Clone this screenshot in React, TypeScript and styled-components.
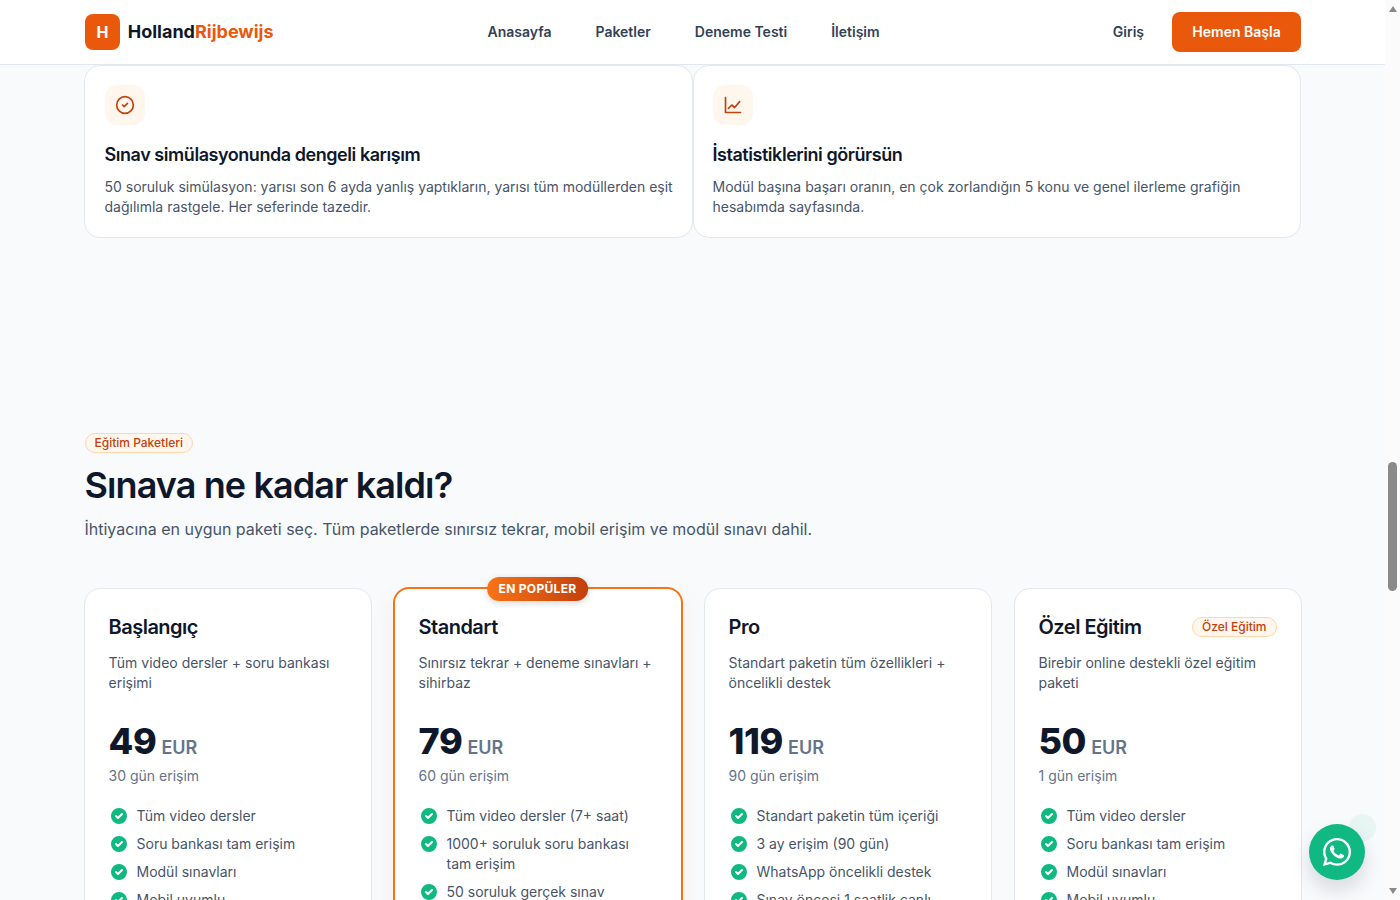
import React from 'react';
import styled, { createGlobalStyle } from 'styled-components';
import { CircleCheck } from 'lucide-react';
import { FaWhatsapp } from 'react-icons/fa';
import { HiCheckCircle } from 'react-icons/hi';

const Global = createGlobalStyle`
  * { box-sizing: border-box; }
  html, body { margin: 0; height: 100%; overflow: hidden; }
  body { font-family: Inter, "Noto Sans", sans-serif; background: #f8fafc; color: #0f172a; }
`;

const Viewport = styled.div`
  display: flex;
  height: 900px;
  overflow: hidden;
  position: relative;
`;
const Page = styled.div`
  flex: 1;
  min-width: 0;
  background: #f8fafc;
`;
const Header = styled.header`
  height: 65px;
  background: #fff;
  border-bottom: 1px solid #e2e8f0;
  position: relative;
  z-index: 2;
`;
const Wrap = styled.div`
  width: 1280px;
  margin: 0 auto;
  padding: 0 32px;
`;
const HeaderRow = styled(Wrap)`
  height: 64px;
  display: flex;
  align-items: center;
`;
const Logo = styled.a`
  display: flex;
  align-items: center;
  gap: 8px;
  width: 189px;
  flex: none;
  padding-left: 0.5px;
`;
const LogoMark = styled.span`
  width: 36px;
  height: 36px;
  border-radius: 8px;
  background: #ea580c;
  color: #fff;
  font-size: 16px;
  font-weight: 700;
  display: flex;
  align-items: center;
  justify-content: center;
`;
const LogoText = styled.span`
  font-size: 18px;
  font-weight: 700;
  color: #0f172a;
  white-space: nowrap;
  padding-bottom: 2px;
`;
const LogoAccent = styled.span`
  color: #ea580c;
`;
const Nav = styled.nav`
  display: flex;
  gap: 44px;
  margin-left: 214px;
`;
const NavLink = styled.a`
  font-size: 14px;
  font-weight: 600;
  color: #334155;
  white-space: nowrap;
  padding-bottom: 2px;
`;
const HeaderRight = styled.div`
  margin-left: auto;
  display: flex;
  align-items: center;
  gap: 27.5px;
`;
const Cta = styled.button`
  width: 129px;
  height: 40px;
  border: none;
  border-radius: 8px;
  background: #ea580c;
  color: #fff;
  font-family: inherit;
  font-size: 14px;
  font-weight: 600;
  padding: 0 0 2px 1px;
`;
const FeatureGrid = styled.div`
  display: grid;
  grid-template-columns: 609px 608px;
  margin-left: -1px;
`;
const FeatureCard = styled.article<{ $lead?: boolean }>`
  height: 173px;
  padding: 19px 16px 19px ${p => (p.$lead ? '20px' : '19px')};
  background: #fff;
  border: 1px solid #e2e8f0;
  border-radius: 16px;
`;
const FeatureIcon = styled.div`
  width: 40px;
  height: 40px;
  border-radius: 12px;
  background: #fff7ed;
  color: #c2410c;
  display: flex;
  align-items: center;
  justify-content: center;
`;
const FeatureTitle = styled.h3`
  margin: 16px 0 8px;
  font-size: 18px;
  line-height: 28px;
  font-weight: 600;
  letter-spacing: -0.025em;
  color: #0f172a;
`;
const FeatureText = styled.p`
  margin: 0;
  font-size: 14px;
  line-height: 20px;
  color: #475569;
`;
const Section = styled.section`
  padding-top: 195px;
`;
const Pill = styled.span`
  display: inline-flex;
  align-items: center;
  height: 20px;
  padding: 0 9px 1px;
  border-radius: 999px;
  background: #fff7ed;
  border: 1px solid #fed7aa;
  color: #c2410c;
  font-size: 12px;
  font-weight: 500;
  white-space: nowrap;
`;
const SectionPill = styled(Pill)`
  display: flex;
  width: fit-content;
`;
const Heading = styled.h2`
  margin: 12px 0 0;
  font-size: 36px;
  line-height: 40px;
  font-weight: 600;
  letter-spacing: -0.025em;
  color: #0f172a;
`;
const Lead = styled.p`
  margin: 12px 0 0;
  font-size: 16px;
  line-height: 24px;
  color: #475569;
`;
const PlanGrid = styled.div`
  margin-top: 47px;
  display: grid;
  grid-template-columns: repeat(4, 1fr);
  gap: 24px;
  align-items: start;
`;
const PlanCard = styled.article<{ $popular?: boolean }>`
  position: relative;
  background: #fff;
  border-radius: 16px;
  padding: 23px 24px;
  height: 600px;
  border: ${p => (p.$popular ? '2px solid #f97316' : '1px solid #e2e8f0')};
  margin: ${p => (p.$popular ? '-1px -2px' : '0 -1px')};
  box-shadow: ${p => (p.$popular ? '0 10px 25px rgba(249,115,22,0.08)' : 'none')};
`;
const PopularBadge = styled.span`
  position: absolute;
  top: -12px;
  left: 50%;
  transform: translateX(-50%);
  height: 24px;
  padding: 0 12px 1px;
  display: flex;
  align-items: center;
  border-radius: 999px;
  background: linear-gradient(90deg, #f97316, #c2410c);
  color: #fff;
  font-size: 12px;
  font-weight: 700;
  letter-spacing: 0.025em;
  white-space: nowrap;
  box-shadow: 0 2px 6px rgba(15, 23, 42, 0.18);
`;
const TitleRow = styled.div`
  display: flex;
  align-items: center;
  justify-content: space-between;
`;
const PlanTitle = styled.h3`
  margin: 0;
  font-size: 20px;
  line-height: 30px;
  font-weight: 600;
  letter-spacing: -0.025em;
  color: #0f172a;
`;
const PlanText = styled.p`
  margin: 11px 0 0;
  font-size: 14px;
  line-height: 20px;
  color: #475569;
`;
const PriceRow = styled.div`
  margin-top: 24px;
  display: flex;
  align-items: baseline;
  gap: 5px;
  height: 46px;
`;
const Price = styled.span`
  font-size: 36px;
  line-height: 48px;
  font-weight: 800;
  letter-spacing: -0.01em;
  color: #0f172a;
`;
const Currency = styled.span`
  font-size: 18px;
  font-weight: 600;
  color: #64748b;
`;
const Access = styled.div`
  margin-top: 3px;
  font-size: 14px;
  line-height: 20px;
  color: #64748b;
`;
const FeatureList = styled.ul`
  list-style: none;
  margin: 20px 0 0;
  padding: 0;
  display: flex;
  flex-direction: column;
  gap: 8px;
`;
const FeatureItem = styled.li`
  display: flex;
  gap: 8px;
  font-size: 14px;
  line-height: 20px;
  color: #475569;
`;
const Check = styled(HiCheckCircle)`
  flex: none;
  width: 20px;
  height: 20px;
  color: #10b981;
`;
const ScrollTrack = styled.div`
  flex: none;
  width: 15px;
  height: 900px;
  background: #fbfbfb;
  display: flex;
  flex-direction: column;
  align-items: center;
`;
const ArrowUp = styled.span`
  margin-top: 6px;
  width: 0;
  height: 0;
  border-left: 4.5px solid transparent;
  border-right: 4.5px solid transparent;
  border-bottom: 6px solid #8a8a8a;
`;
const Thumb = styled.span`
  margin-top: 450px;
  width: 9px;
  height: 129px;
  border-radius: 5px;
  background: #8a8a8a;
`;
const ArrowDown = styled.span`
  margin-top: 297px;
  width: 0;
  height: 0;
  border-left: 4.5px solid transparent;
  border-right: 4.5px solid transparent;
  border-top: 6px solid #8a8a8a;
`;
const Whats = styled.a`
  position: absolute;
  left: 1309px;
  top: 824px;
  width: 56px;
  height: 56px;
  border-radius: 50%;
  background: #10b981;
  color: #fff;
  display: flex;
  align-items: center;
  justify-content: center;
  box-shadow: 0 10px 20px rgba(15, 23, 42, 0.14);
  z-index: 3;
`;
const Ping = styled.span`
  position: absolute;
  left: 1349px;
  top: 814px;
  width: 27px;
  height: 27px;
  border-radius: 50%;
  background: rgba(16, 185, 129, 0.07);
  z-index: 4;
`;

const LineChart = () => (
  <svg width="20" height="20" viewBox="0 0 24 24" fill="none" stroke="currentColor" strokeWidth="2" strokeLinecap="round" strokeLinejoin="round">
    <path d="M3 3v18h18" />
    <path d="M6.5 16l4-4 3.5 3 6-7" />
  </svg>
);

const plans = [
  { name: 'Başlangıç', text: 'Tüm video dersler + soru bankası erişimi', price: '49', access: '30 gün erişim', items: ['Tüm video dersler', 'Soru bankası tam erişim', 'Modül sınavları', 'Mobil uyumlu'] },
  { name: 'Standart', popular: true, text: 'Sınırsız tekrar + deneme sınavları + sihirbaz', price: '79', access: '60 gün erişim', items: ['Tüm video dersler (7+ saat)', '1000+ soruluk soru bankası tam erişim', '50 soruluk gerçek sınav simülasyonu'] },
  { name: 'Pro', text: 'Standart paketin tüm özellikleri + öncelikli destek', price: '119', access: '90 gün erişim', items: ['Standart paketin tüm içeriği', '3 ay erişim (90 gün)', 'WhatsApp öncelikli destek', 'Sınav öncesi 1 saatlik canlı'] },
  { name: 'Özel Eğitim', tag: 'Özel Eğitim', text: 'Birebir online destekli özel eğitim paketi', price: '50', access: '1 gün erişim', items: ['Tüm video dersler', 'Soru bankası tam erişim', 'Modül sınavları', 'Mobil uyumlu'] },
];

export default function App() {
  return (
    <Viewport>
      <Global />
      <Page>
        <Header>
          <HeaderRow>
            <Logo>
              <LogoMark>H</LogoMark>
              <LogoText>Holland<LogoAccent>Rijbewijs</LogoAccent></LogoText>
            </Logo>
            <Nav>
              <NavLink>Anasayfa</NavLink>
              <NavLink>Paketler</NavLink>
              <NavLink>Deneme Testi</NavLink>
              <NavLink>İletişim</NavLink>
            </Nav>
            <HeaderRight>
              <NavLink>Giriş</NavLink>
              <Cta>Hemen Başla</Cta>
            </HeaderRight>
          </HeaderRow>
        </Header>
        <Wrap>
          <FeatureGrid>
            <FeatureCard $lead>
              <FeatureIcon><CircleCheck size={20} /></FeatureIcon>
              <FeatureTitle>Sınav simülasyonunda dengeli karışım</FeatureTitle>
              <FeatureText>50 soruluk simülasyon: yarısı son 6 ayda yanlış yaptıkların, yarısı tüm modüllerden eşit dağılımla rastgele. Her seferinde tazedir.</FeatureText>
            </FeatureCard>
            <FeatureCard>
              <FeatureIcon><LineChart /></FeatureIcon>
              <FeatureTitle>İstatistiklerini görürsün</FeatureTitle>
              <FeatureText>Modül başına başarı oranın, en çok zorlandığın 5 konu ve genel ilerleme grafiğin hesabımda sayfasında.</FeatureText>
            </FeatureCard>
          </FeatureGrid>
          <Section>
            <SectionPill>Eğitim Paketleri</SectionPill>
            <Heading>Sınava ne kadar kaldı?</Heading>
            <Lead>İhtiyacına en uygun paketi seç. Tüm paketlerde sınırsız tekrar, mobil erişim ve modül sınavı dahil.</Lead>
            <PlanGrid>
              {plans.map(plan => (
                <PlanCard key={plan.name} $popular={plan.popular}>
                  {plan.popular && <PopularBadge>EN POPÜLER</PopularBadge>}
                  <TitleRow>
                    <PlanTitle>{plan.name}</PlanTitle>
                    {plan.tag && <Pill>{plan.tag}</Pill>}
                  </TitleRow>
                  <PlanText>{plan.text}</PlanText>
                  <PriceRow>
                    <Price>{plan.price}</Price>
                    <Currency>EUR</Currency>
                  </PriceRow>
                  <Access>{plan.access}</Access>
                  <FeatureList>
                    {plan.items.map(item => (
                      <FeatureItem key={item}>
                        <Check />
                        <span>{item}</span>
                      </FeatureItem>
                    ))}
                  </FeatureList>
                </PlanCard>
              ))}
            </PlanGrid>
          </Section>
        </Wrap>
      </Page>
      <ScrollTrack>
        <ArrowUp />
        <Thumb />
        <ArrowDown />
      </ScrollTrack>
      <Whats aria-label="WhatsApp"><FaWhatsapp size={32} /></Whats>
      <Ping />
    </Viewport>
  );
}
